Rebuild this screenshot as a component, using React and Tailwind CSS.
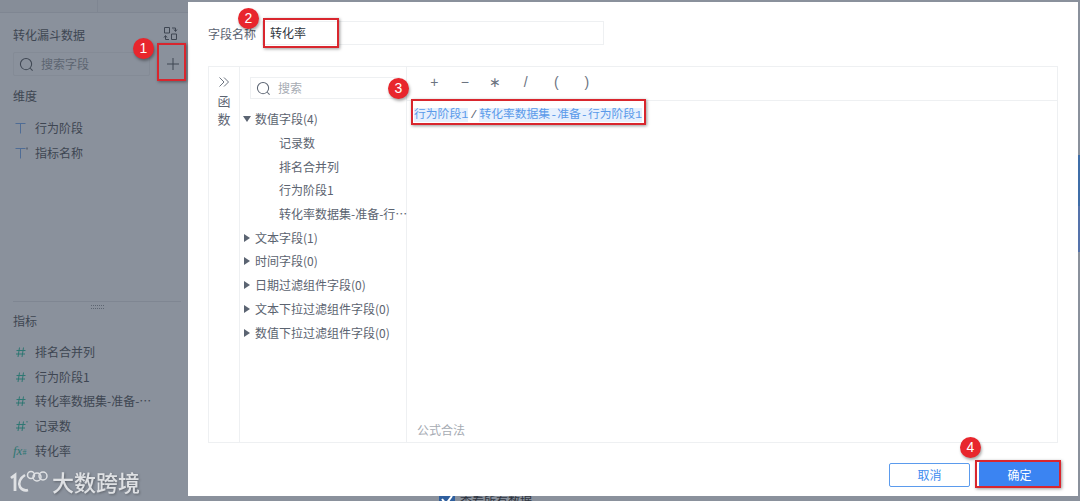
import React from 'react';

const font = { fontFamily: '"Noto Sans CJK SC", "Liberation Sans", sans-serif' };

const SearchIcon = ({ className }) => (
  <svg viewBox="0 0 16 16" fill="none" stroke="currentColor" strokeWidth="1.1" className={className}>
    <circle cx="7.5" cy="7.5" r="6" />
    <path d="M12 12l2.5 2.5" />
  </svg>
);

const TIcon = ({ dot }) => (
  <svg viewBox="0 0 14 14" fill="none" stroke="#4f6c95" strokeWidth="1" className="w-[14px] h-[14px]">
    <path d="M1.5 2.5h10M6.5 2.5v10" />
    {dot && <path d="M13 1.5v2" stroke="#3e4652" />}
  </svg>
);

const HashIcon = ({ dot }) => (
  <svg viewBox="0 0 14 14" fill="none" stroke="#2f7773" strokeWidth="1" className="w-[14px] h-[14px]">
    <path d="M5.5 2.5L4 12M9.5 2.5L8 12M2.5 5.5h9M2 9h9" />
    {dot && <path d="M13 2v1.5" />}
  </svg>
);

const Badge = ({ n, className }) => (
  <div className={`absolute w-[21px] h-[21px] rounded-full bg-[#e8262d] text-white text-[14px] leading-[21px] text-center shadow-[1px_2px_3px_rgba(0,0,0,0.35)] ${className}`}
    style={{ fontFamily: '"Liberation Sans", sans-serif' }}>
    {n}
  </div>
);

const RedBox = ({ className }) => (
  <div className={`absolute border-[2px] border-[#d9262e] shadow-[1px_1px_3px_rgba(0,0,0,0.4)] ${className}`} />
);

const SideItem = ({ icon, children }) => (
  <div className="flex items-center h-[24.75px] text-[12px] text-[#3e4652]">
    <span className="w-[22px] shrink-0 flex justify-start pl-[1px]">{icon}</span>
    <span>{children}</span>
  </div>
);

const Caret = ({ open }) => (
  <span className={open
    ? 'w-0 h-0 mr-[4px] border-x-[4px] border-x-transparent border-t-[6px] border-t-[#5b6472]'
    : 'w-0 h-0 mr-[5px] ml-[1px] border-y-[4px] border-y-transparent border-l-[6px] border-l-[#5b6472]'} />
);

const TreeGroup = ({ open, children }) => (
  <div className="flex items-center h-[23.75px] text-[12px] text-[#5b6370]">
    <Caret open={open} />
    <span>{children}</span>
  </div>
);

const TreeLeaf = ({ children }) => (
  <div className="h-[23.75px] leading-[23.75px] pl-[36px] text-[12px] text-[#5b6370] whitespace-nowrap">{children}</div>
);

const measures = [
  { key: 'a', label: '排名合并列', icon: <HashIcon /> },
  { key: 'b', label: '行为阶段1', icon: <HashIcon /> },
  { key: 'c', label: '转化率数据集-准备-…', icon: <HashIcon /> },
  { key: 'd', label: '记录数', icon: <HashIcon dot /> },
  {
    key: 'e',
    label: '转化率',
    icon: (
      <span className="-ml-[1px] italic text-[13px] leading-none text-[#2f7773]" style={{ fontFamily: '"Liberation Serif", serif' }}>
        fx<span className="text-[8px] not-italic">#</span>
      </span>
    ),
  },
];

const operators = ['+', '−', '∗', '/', '(', ')'];

export default function App() {
  return (
    <div className="relative w-[1080px] h-[501px] overflow-hidden flex bg-[#8a919c]" style={font}>
      {/* left field panel behind the mask */}
      <aside className="w-[188px] h-full shrink-0 flex flex-col">
        <div className="h-[13px] border-b border-[#7f8692] bg-[#868d98] flex">
          <div className="w-[98px] border-r border-[#7f8692]" />
        </div>
        <div className="flex-1 pl-[13px] pr-[3px]">
          <div className="flex items-center justify-between h-[39px] pr-[7px] pt-[4px] text-[12px] text-[#3e4652]">
            <span>转化漏斗数据</span>
            <svg viewBox="0 0 15 15" fill="none" stroke="#3e4652" strokeWidth="1" className="w-[15px] h-[15px] -mt-[3px]">
              <path d="M6.5 7V1.5h-5V7h5zM8.5 13.5h5V8h-5v5.5zM9 2h3.5v3M11 3.5L12.5 5.5 14 3.5M6 13.5H2.5V10M1 11.5L2.5 9.5 4 11.5" />
            </svg>
          </div>
          <div className="flex items-center w-[137px] h-[24px] pl-[5px] border border-[#848b96] rounded-[2px] text-[12px] text-[#5d6571]">
            <SearchIcon className="w-[15px] h-[15px] text-[#3e4652] mr-[7px]" />
            搜索字段
          </div>
          <div className="mt-[10px] text-[12px] leading-[20px] text-[#3e4652]">维度</div>
          <div className="mt-[10px]">
            <SideItem icon={<TIcon />}>行为阶段</SideItem>
            <SideItem icon={<TIcon dot />}>指标名称</SideItem>
          </div>
          <div className="mt-[135px] mr-[4px] border-t border-[#7f8692]">
            <div className="mx-auto mt-[3px] w-[13px] h-[4px] border-y border-dotted border-[#5d6571]" />
          </div>
          <div className="mt-[2px] text-[12px] leading-[20px] text-[#3e4652]">指标</div>
          <div className="mt-[9px]">
            {measures.map((m) => (
              <SideItem key={m.key} icon={m.icon}>{m.label}</SideItem>
            ))}
          </div>
        </div>
      </aside>

      {/* modal column */}
      <div className="w-[890px] h-full shrink-0 flex flex-col pt-[2px]">
        <main className="h-[494px] bg-white px-[20px] flex flex-col">
          <div className="flex items-center h-[64px]">
            <span className="w-[54px] -mt-[1px] text-[12px] text-[#5b6472]">字段名称</span>
            <div className="w-[342px] h-[24px] -mt-[2px] pl-[7px] border border-[#eef0f2] text-[12px] leading-[22px] text-[#30363f]">转化率</div>
          </div>
          <div className="w-[850px] h-[377px] flex border border-[#eef0f2]">
            <div className="w-[31px] shrink-0 border-r border-[#eef0f2] flex flex-col items-center text-[#5b6472]">
              <svg viewBox="0 0 12 12" fill="none" stroke="#5b6472" strokeWidth="0.9" className="w-[12px] h-[12px] mt-[9px]">
                <path d="M1.5 1.5L6 6l-4.5 4.5M6 1.5L10.5 6 6 10.5" />
              </svg>
              <div className="mt-[4px] w-[13px] text-[13px] leading-[18px] text-center">函数</div>
            </div>
            <div className="w-[167px] shrink-0 border-r border-[#eef0f2] pl-[3px]">
              <div className="flex items-center w-[150px] h-[22px] mt-[10px] ml-[7px] pl-[5px] border border-[#eef0f2] text-[12px] text-[#a6abb3]">
                <SearchIcon className="w-[15px] h-[15px] text-[#5b6472] mr-[7px]" />
                搜索
              </div>
              <div className="mt-[8px]">
                <TreeGroup open>数值字段(4)</TreeGroup>
                <TreeLeaf>记录数</TreeLeaf>
                <TreeLeaf>排名合并列</TreeLeaf>
                <TreeLeaf>行为阶段1</TreeLeaf>
                <TreeLeaf>转化率数据集-准备-行…</TreeLeaf>
                <TreeGroup>文本字段(1)</TreeGroup>
                <TreeGroup>时间字段(0)</TreeGroup>
                <TreeGroup>日期过滤组件字段(0)</TreeGroup>
                <TreeGroup>文本下拉过滤组件字段(0)</TreeGroup>
                <TreeGroup>数值下拉过滤组件字段(0)</TreeGroup>
              </div>
            </div>
            <div className="flex-1 flex flex-col">
              <div className="h-[34px] shrink-0 border-b border-[#eef0f2] flex items-center pl-[12px] pb-[2px] text-[14px] text-[#6b7380]">
                {operators.map((op) => (
                  <span key={op} className="w-[30.5px] text-center" style={{ fontFamily: '"Liberation Sans", sans-serif' }}>{op}</span>
                ))}
              </div>
              <div className="flex-1 pl-[7px] pt-[6px] text-[11.8px] leading-[16px] text-[#5b6472] whitespace-nowrap" style={{ fontFamily: '"Liberation Mono", "Noto Sans CJK SC", monospace' }}>
                <span className="bg-[#e6f0fd] text-[#5a9aea]">行为阶段1</span>
                <span className="mx-[2px]">/</span>
                <span className="bg-[#e6f0fd] text-[#5a9aea]">转化率数据集-准备-行为阶段1</span>
              </div>
              <div className="h-[24px] pl-[10px] text-[12px] leading-[24px] text-[#a6abb3]">公式合法</div>
            </div>
          </div>
          <div className="flex justify-end items-center gap-[9px] -mr-[2px] mt-[19px]">
            <button className="w-[81px] h-[24px] border border-[#5b9bed] rounded-[2px] bg-white text-[12px] text-[#3f8cef]">取消</button>
            <button className="w-[81px] h-[25px] rounded-[1px] bg-[#3b84f2] text-[12px] text-white">确定</button>
          </div>
        </main>
        <div className="h-[5px] overflow-hidden pl-[251px]">
          <div className="flex items-center gap-[5px] -mt-[3px] text-[12px] text-[#2f3540] leading-[16px]">
            <span className="w-[16px] h-[16px] rounded-[2px] bg-[#2f5f9e] flex items-start justify-center">
              <svg viewBox="0 0 16 16" fill="none" stroke="white" strokeWidth="2" className="w-[16px] h-[16px]"><path d="M3 6l4 5 6-8" /></svg>
            </span>
            查看所有数据
          </div>
        </div>
      </div>

      {/* sliver of the page behind the modal */}
      <div className="flex-1 flex flex-col pt-[155px]">
        <div className="h-[51px] bg-[#3f6ea8]" />
        <div className="h-[46px] bg-[#5573ab]" />
      </div>

      {/* annotations */}
      <RedBox className="left-[157px] top-[43px] w-[29px] h-[38px]" />
      <RedBox className="left-[263px] top-[18px] w-[76px] h-[30px]" />
      <RedBox className="left-[411px] top-[99px] w-[235px] h-[26px]" />
      <RedBox className="left-[975px] top-[460px] w-[86px] h-[28px]" />
      <Badge n="1" className="left-[133px] top-[38px]" />
      <Badge n="2" className="left-[238px] top-[8px]" />
      <Badge n="3" className="left-[388px] top-[78px]" />
      <Badge n="4" className="left-[960px] top-[437px]" />
      <div className="absolute left-[166px] top-[57px]">
        <svg viewBox="0 0 14 14" stroke="#3e4652" strokeWidth="1" className="w-[14px] h-[14px]"><path d="M7 1v12M1 7h12" /></svg>
      </div>

      {/* watermark */}
      <div className="absolute left-[10px] top-[468px] flex items-center text-[#dfe1e4]">
        <svg viewBox="0 0 38 26" fill="none" stroke="#dfe1e4" className="w-[38px] h-[26px]">
          <path d="M1 10l4-3v16" strokeWidth="2.8" />
          <path d="M15 7c-5 3-7 8-5 12 2 3 5 4 8 3" strokeWidth="2.6" />
          <circle cx="21" cy="7" r="3.5" strokeWidth="1.5" />
          <circle cx="27" cy="9" r="4" strokeWidth="1.5" />
          <circle cx="33" cy="8" r="4" strokeWidth="1.5" />
        </svg>
        <span className="ml-[4px] text-[22px] leading-none font-medium drop-shadow-[1px_1px_1px_rgba(0,0,0,0.3)]">大数跨境</span>
      </div>
    </div>
  );
}
